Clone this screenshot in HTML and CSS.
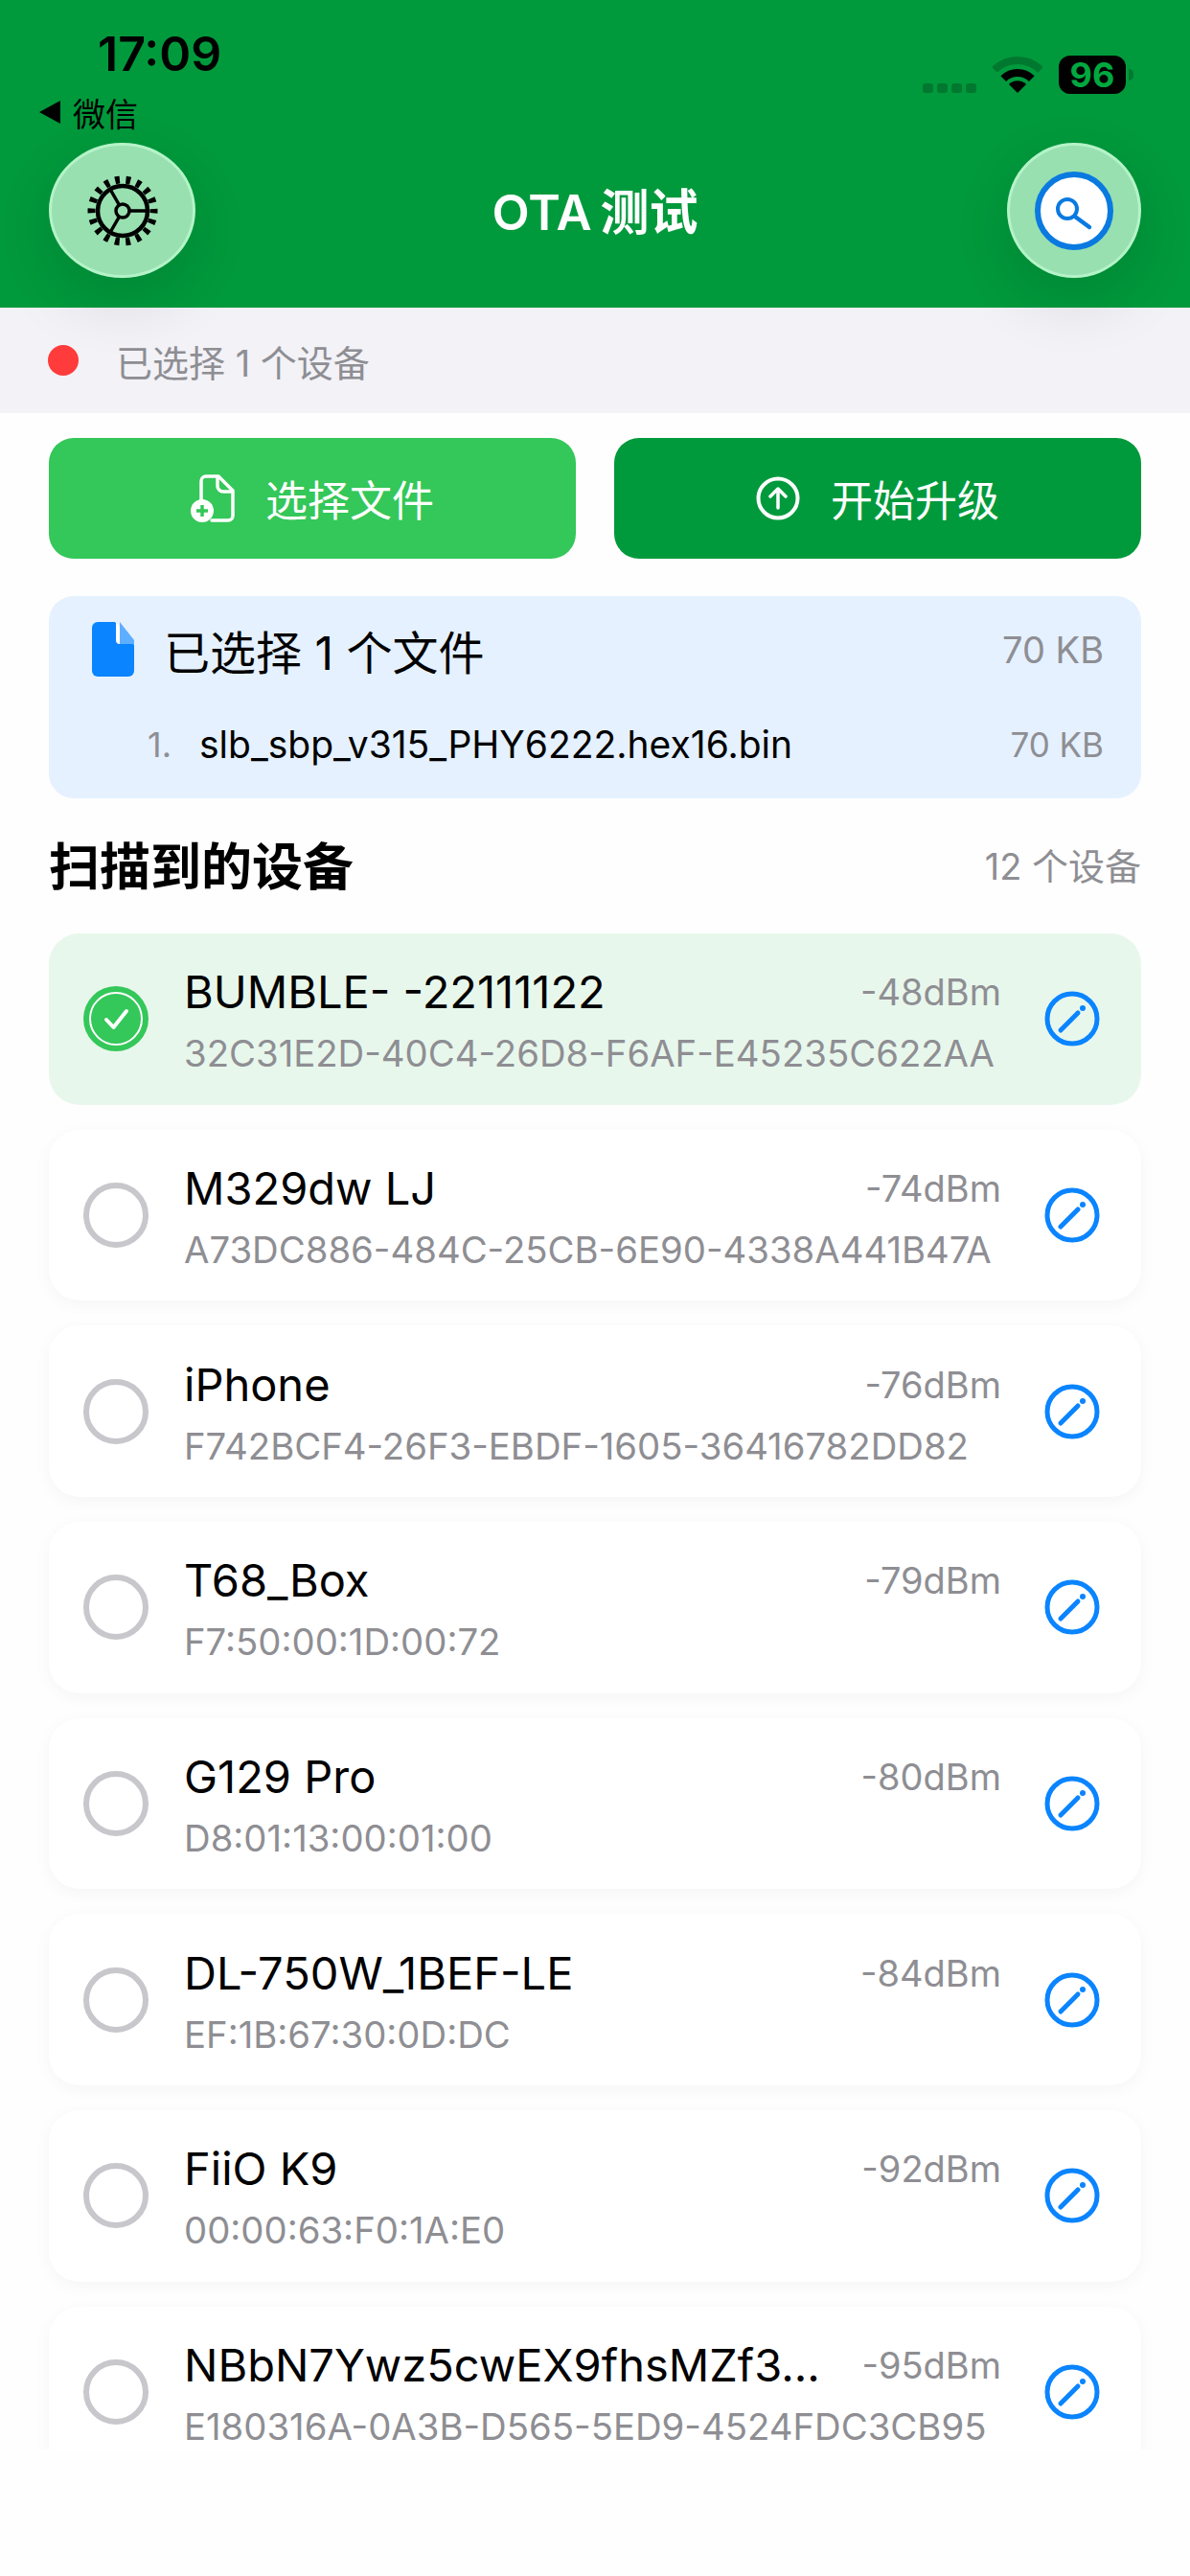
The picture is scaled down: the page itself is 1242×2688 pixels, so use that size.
FILE: index.html
```html
<!DOCTYPE html>
<html lang="zh">
<head>
  <meta charset="UTF-8">
  <title>OTA 测试</title>
  <link rel="stylesheet" href="styles.css">
</head>
<body>
  <svg class="defs" width="0" height="0">
    <symbol id="edit" viewBox="0 0 60 60">
      <circle cx="30" cy="30" r="26" fill="none" stroke="#0a84ff" stroke-width="5"/>
      <path d="M18 42L36 24" fill="none" stroke="#0a84ff" stroke-width="5" stroke-linecap="round"/>
      <circle cx="41" cy="19" r="3" fill="#0a84ff"/>
    </symbol>
  </svg>

  <header class="top">
    <div class="statusbar">
      <span class="time">17:09</span>
      <div class="status-right">
        <div class="signal"><i></i><i></i><i></i><i></i></div>
        <svg class="wifi" width="52" height="38" viewBox="0 0 52 38">
          <path d="M2 14A34 34 0 0 1 50 14" fill="none" stroke="#00782f" stroke-width="8"/>
          <path d="M11.200 23.200A21 21 0 0 1 40.800 23.200" fill="none" stroke="#000" stroke-width="8"/>
          <path d="M26 38L17 29A12.700 12.700 0 0 1 35 29Z" fill="#000"/>
        </svg>
        <div class="battery">96</div>
        <div class="battery-nub"></div>
      </div>
    </div>
    <div class="back">
      <svg width="22" height="24" viewBox="0 0 22 24"><path d="M22 0V24L0 12Z" fill="#000"/></svg>
      <span>微信</span>
    </div>
    <nav class="nav">
      <div class="nav-left">
        <button class="round round-wide">
          <svg width="76" height="76" viewBox="0 0 76 76">
            <circle cx="38" cy="38" r="32.500" fill="none" stroke="#000" stroke-width="8" stroke-dasharray="4.800 6.540" stroke-dashoffset="2.400"/>
            <circle cx="38" cy="38" r="26" fill="none" stroke="#000" stroke-width="4.500"/>
            <circle cx="38" cy="38" r="7" fill="none" stroke="#000" stroke-width="3.500"/>
            <path d="M45 38H64M34.500 32L25 15.500M34.500 44L25 60.500" fill="none" stroke="#000" stroke-width="3.500"/>
          </svg>
        </button>
      </div>
      <h1 class="title">OTA 测试</h1>
      <div class="nav-right">
        <button class="round">
          <svg width="84" height="84" viewBox="0 0 84 84">
            <circle cx="42" cy="42" r="38" fill="#fff" stroke="#0a7ae0" stroke-width="6"/>
            <circle cx="35" cy="40" r="10" fill="none" stroke="#0a7ae0" stroke-width="4"/>
            <path d="M43 48L58 59" fill="none" stroke="#0a7ae0" stroke-width="4.500" stroke-linecap="round"/>
          </svg>
        </button>
      </div>
    </nav>
  </header>

  <div class="strip">
    <span class="dot"></span>
    <span>已选择 1 个设备</span>
  </div>

  <section class="actions">
    <button class="action action-light">
      <svg width="46" height="50" viewBox="0 0 46 50">
        <path d="M11 28V7a5 5 0 0 1 5-5h13l15 15v26a5 5 0 0 1-5 5H22" fill="none" stroke="#fff" stroke-width="3.500" stroke-linecap="round"/>
        <path d="M28 3v9a6 6 0 0 0 6 6h9" fill="none" stroke="#fff" stroke-width="3.500"/>
        <circle cx="12" cy="38" r="12" fill="#fff"/>
        <path d="M12 32v12M6 38h12" stroke="#34c759" stroke-width="3.500"/>
      </svg>
      <span>选择文件</span>
    </button>
    <button class="action action-dark">
      <svg width="46" height="46" viewBox="0 0 46 46">
        <circle cx="23" cy="23" r="20.500" fill="none" stroke="#fff" stroke-width="4"/>
        <path d="M23 33V14M15 21l8-8 8 8" fill="none" stroke="#fff" stroke-width="3.500" stroke-linecap="round" stroke-linejoin="round"/>
      </svg>
      <span>开始升级</span>
    </button>
  </section>

  <section class="files">
    <div class="files-head">
      <svg width="44" height="57" viewBox="0 0 44 57">
        <path d="M6 0H24L44 24V51a6 6 0 0 1-6 6H6a6 6 0 0 1-6-6V6a6 6 0 0 1 6-6z" fill="#0a84ff"/>
        <path d="M25 0L44 23H29a4 4 0 0 1-4-4z" fill="#fff"/>
        <path d="M29 0L44 19V23H29z" fill="#5eaeff"/>
      </svg>
      <span class="files-title">已选择 1 个文件</span>
      <span class="size size-big">70 KB</span>
    </div>
    <div class="file-row">
      <span class="file-num">1.</span>
      <span class="file-name">slb_sbp_v315_PHY6222.hex16.bin</span>
      <span class="size">70 KB</span>
    </div>
  </section>

  <div class="list-head">
    <h2>扫描到的设备</h2>
    <span class="size size-big">12 个设备</span>
  </div>

  <div class="list">
    <div class="card card-on">
      <svg class="radio" width="68" height="68" viewBox="0 0 68 68">
        <circle cx="34" cy="34" r="34" fill="#34c759"/>
        <circle cx="34" cy="34" r="27" fill="none" stroke="#fff" stroke-width="2"/>
        <path d="M24 35l7.500 8L45 26" fill="none" stroke="#fff" stroke-width="4" stroke-linecap="round" stroke-linejoin="round"/>
      </svg>
      <div class="info">
        <div class="info-top"><span class="name">BUMBLE- -22111122</span><span class="rssi">-48dBm</span></div>
        <div class="mac">32C31E2D-40C4-26D8-F6AF-E45235C622AA</div>
      </div>
      <svg class="edit" width="60" height="60"><use href="#edit"/></svg>
    </div>
    <div class="card">
      <span class="radio radio-off"></span>
      <div class="info">
        <div class="info-top"><span class="name">M329dw LJ</span><span class="rssi">-74dBm</span></div>
        <div class="mac">A73DC886-484C-25CB-6E90-4338A441B47A</div>
      </div>
      <svg class="edit" width="60" height="60"><use href="#edit"/></svg>
    </div>
    <div class="card">
      <span class="radio radio-off"></span>
      <div class="info">
        <div class="info-top"><span class="name">iPhone</span><span class="rssi">-76dBm</span></div>
        <div class="mac">F742BCF4-26F3-EBDF-1605-36416782DD82</div>
      </div>
      <svg class="edit" width="60" height="60"><use href="#edit"/></svg>
    </div>
    <div class="card">
      <span class="radio radio-off"></span>
      <div class="info">
        <div class="info-top"><span class="name">T68_Box</span><span class="rssi">-79dBm</span></div>
        <div class="mac">F7:50:00:1D:00:72</div>
      </div>
      <svg class="edit" width="60" height="60"><use href="#edit"/></svg>
    </div>
    <div class="card">
      <span class="radio radio-off"></span>
      <div class="info">
        <div class="info-top"><span class="name">G129 Pro</span><span class="rssi">-80dBm</span></div>
        <div class="mac">D8:01:13:00:01:00</div>
      </div>
      <svg class="edit" width="60" height="60"><use href="#edit"/></svg>
    </div>
    <div class="card">
      <span class="radio radio-off"></span>
      <div class="info">
        <div class="info-top"><span class="name">DL-750W_1BEF-LE</span><span class="rssi">-84dBm</span></div>
        <div class="mac">EF:1B:67:30:0D:DC</div>
      </div>
      <svg class="edit" width="60" height="60"><use href="#edit"/></svg>
    </div>
    <div class="card">
      <span class="radio radio-off"></span>
      <div class="info">
        <div class="info-top"><span class="name">FiiO K9</span><span class="rssi">-92dBm</span></div>
        <div class="mac">00:00:63:F0:1A:E0</div>
      </div>
      <svg class="edit" width="60" height="60"><use href="#edit"/></svg>
    </div>
    <div class="card">
      <span class="radio radio-off"></span>
      <div class="info">
        <div class="info-top"><span class="name">NBbN7Ywz5cwEX9fhsMZf3...</span><span class="rssi">-95dBm</span></div>
        <div class="mac">E180316A-0A3B-D565-5ED9-4524FDC3CB95</div>
      </div>
      <svg class="edit" width="60" height="60"><use href="#edit"/></svg>
    </div>
  </div>
</body>
</html>
```

FILE: styles.css
```css
* {
  box-sizing: border-box;
}
body {
  margin: 0;
  height: 2688px;
  overflow: hidden;
  background: #fefefe;
  font-family: Inter, "Noto Sans CJK SC", sans-serif;
  color: #000;
}
.defs {
  position: absolute;
}
button {
  font-family: inherit;
  border: none;
  padding: 0;
}

/* top green bar */
.top {
  position: relative;
  z-index: 2;
  height: 321px;
  padding-top: 25px;
  background: #009a3c;
}
.statusbar {
  display: flex;
  justify-content: space-between;
  height: 75px;
  padding: 0 59px 0 102px;
}
.time {
  font-size: 50px;
  font-weight: 600;
  line-height: 62px;
}
.status-right {
  display: flex;
  align-items: flex-start;
  margin-top: 33px;
}
.signal {
  display: flex;
  gap: 4px;
  margin: 29px 17px 0 0;
}
.signal i {
  width: 11px;
  height: 10px;
  border-radius: 3px;
  background: #00782f;
}
.wifi {
  margin: 1px 17px 0 0;
}
.battery {
  width: 70px;
  height: 40px;
  border-radius: 12px;
  background: #000;
  color: #00a83f;
  font-size: 36px;
  font-weight: 700;
  line-height: 40px;
  text-align: center;
}
.battery-nub {
  width: 5px;
  height: 12px;
  margin: 14px 0 0 3px;
  border-radius: 0 6px 6px 0;
  background: #00782f;
}
.back {
  display: flex;
  align-items: center;
  gap: 13px;
  height: 34px;
  padding-left: 41px;
  font-size: 34px;
}
.nav {
  display: grid;
  grid-template-columns: 1fr auto 1fr;
  align-items: center;
  margin-top: 15px;
  padding: 0 51px;
}
.nav-right {
  display: flex;
  justify-content: flex-end;
}
.round {
  display: flex;
  align-items: center;
  justify-content: center;
  width: 140px;
  height: 141px;
  border: 3px solid #b4f3c8;
  border-radius: 50%;
  background: #98e0b0;
  box-shadow: 0 20px 70px rgba(0, 0, 0, .14);
}
.round-wide {
  width: 153px;
}
.title {
  margin: 0 0 4px;
  color: #fff;
  font-size: 51px;
  font-weight: 600;
  word-spacing: -4px;
}

/* selected device strip */
.strip {
  display: flex;
  align-items: center;
  gap: 39px;
  height: 110px;
  padding-left: 50px;
  background: #f2f2f7;
  color: #8e8e93;
  font-size: 38px;
}
.dot {
  width: 32px;
  height: 32px;
  border-radius: 50%;
  background: #ff3b3b;
}

.actions {
  display: flex;
  gap: 40px;
  margin: 26px 51px 0;
}
.action {
  flex: 1;
  display: flex;
  align-items: center;
  justify-content: center;
  gap: 32px;
  height: 126px;
  border-radius: 26px;
  color: #fff;
  font-size: 44px;
}
.action-light {
  background: #34c759;
}
.action-dark {
  background: #009a3c;
}

/* chosen file box */
.files {
  height: 211px;
  margin: 39px 51px 0;
  padding: 27px 39px 0 45px;
  border-radius: 26px;
  background: #e5f1ff;
}
.files-head {
  display: flex;
  align-items: center;
  gap: 31px;
  height: 57px;
}
.files-title {
  flex: 1;
  font-size: 48px;
}
.size {
  color: #8e8e93;
  font-size: 35px;
}
.size-big {
  font-size: 38px;
}
.file-row {
  display: flex;
  align-items: center;
  margin-top: 47px;
  padding-left: 58px;
  font-size: 39px;
}
.file-num {
  width: 54px;
  font-size: 36px;
  color: #8e8e93;
}
.file-name {
  flex: 1;
}

.list-head {
  display: flex;
  align-items: center;
  justify-content: space-between;
  height: 70px;
  margin: 33px 51px 0;
}
.list-head h2 {
  margin: 0;
  font-size: 53px;
  font-weight: 600;
}

/* device list, cut off at the bottom */
.list {
  display: flex;
  flex-direction: column;
  gap: 26px;
  height: 1582px;
  margin-top: 38px;
  padding: 0 51px;
  overflow: hidden;
}
.card {
  flex: none;
  display: flex;
  align-items: center;
  height: 178.700px;
  padding: 0 42px 0 36px;
  border-radius: 32px;
  background: #fff;
  box-shadow: 0 4px 18px rgba(0, 0, 0, .04);
}
.card-on {
  background: #e8f7ec;
  box-shadow: none;
}
.radio {
  flex: none;
  width: 68px;
  height: 68px;
  margin-right: 37px;
}
.radio-off {
  border: 6px solid #c7c7cc;
  border-radius: 50%;
}
.info {
  flex: 1;
  min-width: 0;
  display: flex;
  flex-direction: column;
  gap: 16px;
}
.info-top {
  display: flex;
  align-items: center;
  justify-content: space-between;
}
.name {
  font-size: 47px;
  line-height: 56px;
  white-space: nowrap;
}
.rssi {
  color: #8e8e93;
  font-size: 38px;
}
.mac {
  color: #8e8e93;
  font-size: 38.300px;
  line-height: 40px;
  white-space: nowrap;
}
.edit {
  flex: none;
  margin-left: 44px;
}
```
